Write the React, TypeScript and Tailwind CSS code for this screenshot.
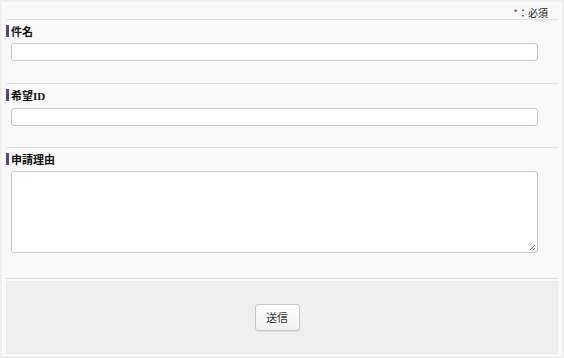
import React from "react";

const font = { fontFamily: '"Noto Sans CJK JP", "Noto Sans", sans-serif' };

function Label({ children }: { children: React.ReactNode }) {
  return (
    <div className="flex items-center h-[12px]">
      <div className="w-[3px] h-[12px] bg-[#54448a]" />
      <div className="ml-[2px] text-[11px] leading-[12px] font-bold text-[#111]">{children}</div>
    </div>
  );
}

export default function App() {
  return (
    <div className="w-[564px] h-[358px] bg-[#efefef] p-[2px]" style={font}>
      <div className="w-full h-full bg-[#f9f9f9] border border-white pl-[3px] pr-[3px] flex flex-col">
        <div className="h-[16px] flex items-center justify-end pr-[10px] pt-[3px] text-[10px] leading-[12px] text-[#111]">
          <span className="text-[#c0303a]">*</span>
          <span>：必須</span>
        </div>
        <div className="h-px bg-[#e2e2e2]" />
        <div className="h-[63px] pt-[5px]">
          <Label>件名</Label>
          <div className="mt-[6px] ml-[5px] w-[527px] h-[18px] bg-white border border-[#c8c8c8] rounded-[3px]" />
        </div>
        <div className="h-px bg-[#e2e2e2]" />
        <div className="h-[63px] pt-[5px]">
          <Label>
            希望<span style={{ fontFamily: '"Liberation Serif", serif' }}>ID</span>
          </Label>
          <div className="mt-[7px] ml-[5px] w-[527px] h-[18px] bg-white border border-[#c8c8c8] rounded-[3px]" />
        </div>
        <div className="h-px bg-[#e2e2e2]" />
        <div className="h-[130px] pt-[5px]">
          <Label>申請理由</Label>
          <div className="mt-[6px] ml-[5px] w-[527px] h-[82px] bg-white border border-[#c8c8c8] rounded-[3px] relative">
            <svg className="absolute right-[1px] bottom-[1px]" width="7" height="7" viewBox="0 0 7 7">
              <path d="M6 1 L1 6 M6 4 L4 6" stroke="#888" strokeWidth="1" />
            </svg>
          </div>
        </div>
        <div className="h-px bg-[#dcdcdc]" />
        <div className="mt-[2px] h-[73px] bg-[#efefef] border border-[#e8e8e8] flex items-center justify-center pr-[10px]">
          <button className="w-[45px] h-[27px] rounded-[3px] border border-[#c6c6c6] bg-gradient-to-b from-white to-[#f0f0f0] text-[11px] text-[#333] shadow-[0_1px_1px_rgba(0,0,0,0.08)]">
            送信
          </button>
        </div>
      </div>
    </div>
  );
}
